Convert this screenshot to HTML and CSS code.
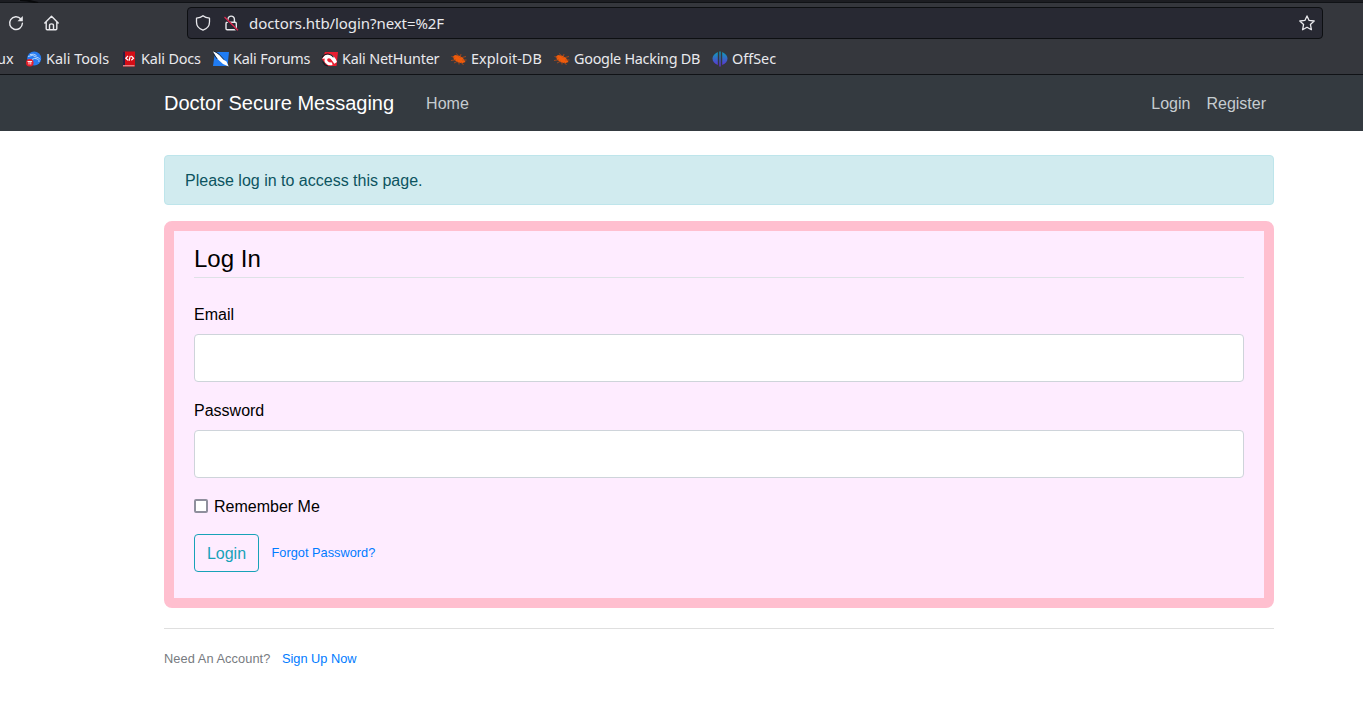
FILE: index.html
```html
<!DOCTYPE html>
<html lang="en">
<head>
<meta charset="utf-8">
<title>Doctor Secure Messaging</title>
<link rel="stylesheet" href="styles.css">
</head>
<body>
<div class="chrome">
  <div class="tab-edge"><svg width="44" height="3" viewBox="0 0 44 3"><path d="M20 0q8 0 18 3" fill="none" stroke="#08090b" stroke-width="2"/></svg></div>
  <div class="toolbar">
    <svg class="reload" width="16" height="16" viewBox="0 0 16 16"><path d="M12.900 4A6.400 6.400 0 1 0 14.400 8.300" fill="none" stroke="#e9e9ed" stroke-width="1.400" stroke-linecap="round"/><path d="M14.800 1v5.300H9.500z" fill="#e9e9ed"/></svg>
    <svg class="home" width="16" height="16" viewBox="0 0 16 16"><path d="M.8 8 7.500 1.200 14.200 8M2.200 6.800v7q0 1 1 1h8.600q1 0 1-1v-7M5.500 14.500v-4q0-1.600 2-1.600t2 1.600v4" fill="none" stroke="#e9e9ed" stroke-width="1.400" stroke-linecap="round" stroke-linejoin="round"/></svg>
    <div class="address">
      <svg width="16" height="16" viewBox="0 0 16 16"><path d="M8 .8C6.300 2.300 4 3 1.500 3.200V7c0 4.100 2.800 6.900 6.500 8.200 3.700-1.300 6.500-4.100 6.500-8.200V3.200C12 3 9.700 2.300 8 .8z" fill="none" stroke="#e9e9ed" stroke-width="1.300" stroke-linejoin="round"/></svg>
      <svg class="lock" width="16" height="16" viewBox="0 0 16 16"><path d="M5 7V4.300a3.200 3.200 0 0 1 6.400 0V7" fill="none" stroke="#e9e9ed" stroke-width="1.400"/><rect x="3" y="7.200" width="10.300" height="7.600" rx="1.200" fill="none" stroke="#e9e9ed" stroke-width="1.400"/><path d="M2 3 14 15" stroke="#282933" stroke-width="2.200"/><path d="M1.500 2 15 15.300" stroke="#e22850" stroke-width="1.300"/></svg>
      <span class="url">doctors.htb/login?next=%2F</span>
      <svg class="star" width="16" height="16" viewBox="0 0 16 16"><path d="m8 .9 2.100 4.500 5.100.6-3.800 3.400 1 5.300L8 12.200l-4.400 2.500 1-5.300L.8 6l5.100-.6z" fill="none" stroke="#e9e9ed" stroke-width="1.300" stroke-linejoin="round"/></svg>
    </div>
  </div>
  <div class="bookmarks">
    <span class="bookmark cut">ux</span>
    <span class="bookmark tools"><svg width="16" height="16" viewBox="0 0 16 16"><circle cx="8.200" cy="7.500" r="7" fill="#287cf0"/><path d="M2 5.500q5-2.500 8 .5 3 .2 4 2.500M4 3.500q4-1 6.500 1M6 8.500q2.500-2 5.500-.5 2 1.500 1.500 3" fill="none" stroke="#c5e1ff" stroke-width=".9"/><circle cx="3.800" cy="11.700" r="3.800" fill="#e71f2b"/><path d="M1.500 10.500h4.600M3 10.500v3M4.800 10.500v3" stroke="#fff" stroke-width=".9"/></svg>Kali Tools</span>
    <span class="bookmark docs"><svg width="16" height="16" viewBox="0 0 16 16"><path d="M2 .5h12v15H2z" fill="#d50d16"/><path d="M2 .5h2v14H2z" fill="#271f43"/><path d="M2 14.300h11.500v1H2z" fill="#f0b4b5"/><path d="M7 5 4.800 7.200 7 9.200M10.300 5l2.200 2.200-2.200 2M9.300 4.800l-1.300 5" fill="none" stroke="#fff" stroke-width="1.200"/></svg>Kali Docs</span>
    <span class="bookmark forums"><svg width="16" height="16" viewBox="0 0 16 16"><path d="M2 1h14l-1.500 14H0z" fill="#207cf3"/><path d="M0 .5 3 1.500 6.500 4 11 9l2.500 1.500 2.200 5-5.700-2.500-5.500-5z" fill="#fff"/><path d="m1 0 5 3.200 5 5.500M.5 3l3.700 5" fill="none" stroke="#17202c" stroke-width=".9"/></svg>Kali Forums</span>
    <span class="bookmark hunter"><svg width="16" height="16" viewBox="0 0 16 16"><path d="M3 1h13l-1.500 14H5L0 8z" fill="#e91f31"/><path d="M.3 8q1.500-4.500 6.500-4.700 5.500.2 8.200 7.700l-2.700 1.700-2.300-3.200Q7.500 6 5.300 8q-.8 2 1.700 3.300l3 .2.500 2.500q-5 1-7.500-2.500-.8-2-.3-4z" fill="#fff"/><path d="M0 6.500q3-4.500 7-3.300 3 .5 4.500 3M.5 10.500 3 14l3 1" fill="none" stroke="#171a20" stroke-width="1.100"/></svg>Kali NetHunter</span>
    <span class="bookmark exploit"><svg width="16" height="16" viewBox="0 0 16 16"><path d="M2 5.500 4 4l4.500.8L12 7l2.500 4-3.500 1.300-4.500-1L3 8.500z" fill="#ee5b0b"/><path d="m.5 5.500 3 1M0 9.500l5-.8M3 12l4-2M5.500 2.500l2 3M10 3 9 7M11 6.500l4-1M11 9h4.500M10 11l2.500 3M8 11v2.500" stroke="#b94b17" stroke-width=".8"/></svg>Exploit-DB</span>
    <span class="bookmark google"><svg width="16" height="16" viewBox="0 0 16 16"><path d="M2 5.500 4 4l4.500.8L12 7l2.500 4-3.500 1.300-4.500-1L3 8.500z" fill="#ee5b0b"/><path d="m.5 5.500 3 1M0 9.500l5-.8M3 12l4-2M5.500 2.500l2 3M10 3 9 7M11 6.500l4-1M11 9h4.500M10 11l2.500 3M8 11v2.500" stroke="#b94b17" stroke-width=".8"/></svg>Google Hacking DB</span>
    <span class="bookmark offsec"><svg width="16" height="16" viewBox="0 0 16 16"><defs><linearGradient id="offsec" gradientUnits="userSpaceOnUse" x1="0" y1="0" x2="0" y2="16"><stop stop-color="#08a4b8"/><stop offset="1" stop-color="#6727d5"/></linearGradient></defs><path d="M5.800.9v13.200Q.5 11.500.5 7.500T5.800.9zM10.200.9v13.200q5.300-2.600 5.300-6.600T10.200.9zM7.300.5h1.400v15H7.300z" fill="url(#offsec)"/></svg>OffSec</span>
  </div>
</div>
<nav class="navbar">
  <div class="container nav-row">
    <a class="brand">Doctor Secure Messaging</a>
    <a class="nav-link">Home</a>
    <div class="nav-right"><a class="nav-link">Login</a><a class="nav-link">Register</a></div>
  </div>
</nav>
<main class="container">
  <div class="alert">Please log in to access this page.</div>
  <section class="card">
    <form>
      <h1 class="legend">Log In</h1>
      <div class="field"><label for="email">Email</label><input class="control" id="email" type="text"></div>
      <div class="field"><label for="password">Password</label><input class="control" id="password" type="password"></div>
      <label class="remember"><input class="check" type="checkbox"><span class="remember-text">Remember Me</span></label>
      <div class="actions"><button class="submit" type="button">Login</button><a class="link">Forgot Password?</a></div>
    </form>
  </section>
  <footer class="signup"><span class="question">Need An Account?</span><a class="link">Sign Up Now</a></footer>
</main>
</body>
</html>
```
FILE: styles.css
```css
* { box-sizing: border-box; }
body { margin: 0; background: #fff; color: #000; font: 16px/24px "Liberation Sans", Arial, sans-serif; overflow: hidden; }
svg { display: block; flex: none; }
.chrome { height: 75px; background: #35373d; border-bottom: 1px solid #101216; font-family: "Noto Sans", sans-serif; color: #e9e9ed; }
.tab-edge { height: 3px; background: #1c1d22; border-bottom: 1px solid #101216; }
.toolbar { display: flex; align-items: center; height: 40px; padding: 0 40px 0 8px; }
.home { margin-left: 20px; }
.address { display: flex; align-items: center; flex: 1; height: 32px; margin-left: 127px; padding: 0 7px; background: #282933; border: 1px solid #0d0f12; border-radius: 4px; }
.lock { margin-left: 12px; }
.url { margin-left: 10px; font-size: 15px; letter-spacing: -.07px; }
.star { margin-left: auto; }
.bookmarks { display: flex; align-items: center; height: 31px; padding-top: 1px; font-size: 14.4px; line-height: 20px; }
.bookmark { display: flex; align-items: center; gap: 4px; flex: none; white-space: nowrap; }
.cut { width: 29px; margin-left: -3px; }
.tools { width: 95px; }
.docs { width: 92px; letter-spacing: -.15px; }
.forums { width: 109px; letter-spacing: -.2px; }
.hunter { width: 129px; letter-spacing: -.2px; }
.exploit { width: 103px; letter-spacing: .05px; }
.google { width: 158px; letter-spacing: -.27px; }
.navbar { height: 56px; background: #343a40; }
.container { width: 1110px; margin-left: 164px; }
.nav-row { display: flex; align-items: center; height: 56px; }
.brand { margin-right: 24px; font-size: 20px; color: #fff; }
.nav-link { padding: 9px 8px 7px; color: #c6ccd0; }
.nav-right { display: flex; margin-left: auto; }
.alert { height: 50px; margin-top: 24px; padding: 13px 20px 11px; background: #d1ebef; border: 1px solid #bee5eb; border-radius: 4px; color: #0c5460; }
.card { height: 387px; margin-top: 16px; padding: 10px 20px; background: #feecff; border: 10px solid #ffbfcf; border-radius: 8px; }
.legend { height: 37px; margin: 0 0 24px; border-bottom: 1px solid #dee2e6; font-size: 24px; font-weight: 400; line-height: 36px; }
.field { margin-bottom: 16px; }
.field label { display: block; padding-top: 1px; margin-bottom: 7px; }
.control { display: block; width: 100%; height: 48px; padding: 8px 16px; background: #fff; border: 1px solid #ced4da; border-radius: 4px; }
.remember { display: flex; align-items: center; height: 24px; }
.remember-text { padding-top: 2px; }
.check { appearance: none; width: 14px; height: 14px; margin: 0 6px 0 0; background: #fff; border: 2px solid #8f8f9d; border-radius: 2px; }
.actions { display: flex; align-items: center; margin-top: 16px; }
.submit { width: 65px; height: 38px; margin-right: 12.5px; padding: 2px 0 0; background: transparent; border: 1px solid #17a2b8; border-radius: 4px; color: #17a2b8; font: inherit; }
.link { color: #007bff; font-size: 12.8px; }
.signup { display: flex; margin-top: 20px; padding-top: 18px; border-top: 1px solid #dfdfdf; color: #777b7f; font-size: 12.8px; }
.question { letter-spacing: .07px; }
.signup .link { margin-left: 11.5px; }
```
